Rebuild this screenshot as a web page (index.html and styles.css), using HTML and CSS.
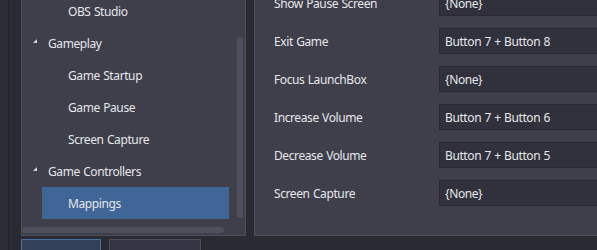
FILE: index.html
```html
<!DOCTYPE html>
<html lang="en">
<head>
    <meta charset="UTF-8">
    <title>Options - Game Controllers</title>
    <link rel="stylesheet" href="styles.css">
</head>
<body>
    <div class="app">
        <div class="rail"></div>
        <div class="content">
            <div class="panes">
                <div class="tree-panel">
                    <ul class="tree">
                        <li class="node child">OBS Studio</li>
                        <li class="node parent"><span class="arrow"></span>Gameplay</li>
                        <li class="node child">Game Startup</li>
                        <li class="node child">Game Pause</li>
                        <li class="node child">Screen Capture</li>
                        <li class="node parent"><span class="arrow"></span>Game Controllers</li>
                        <li class="node child selected">Mappings</li>
                    </ul>
                    <div class="vscroll"><div class="thumb-v"></div></div>
                    <div class="hscroll"><div class="thumb-h"></div></div>
                </div>

                <div class="form-panel">
                    <div class="row">
                        <label>Show Pause Screen</label>
                        <div class="field">{None}</div>
                    </div>
                    <div class="row">
                        <label>Exit Game</label>
                        <div class="field">Button 7 + Button 8</div>
                    </div>
                    <div class="row">
                        <label>Focus LaunchBox</label>
                        <div class="field">{None}</div>
                    </div>
                    <div class="row">
                        <label>Increase Volume</label>
                        <div class="field">Button 7 + Button 6</div>
                    </div>
                    <div class="row">
                        <label>Decrease Volume</label>
                        <div class="field">Button 7 + Button 5</div>
                    </div>
                    <div class="row">
                        <label>Screen Capture</label>
                        <div class="field">{None}</div>
                    </div>
                </div>
            </div>

            <div class="footer">
                <button class="btn primary">OK</button>
                <button class="btn">Cancel</button>
            </div>
        </div>
    </div>
</body>
</html>
```

FILE: styles.css
```css
body {
    margin: 0;
    height: 250px;
    overflow: hidden;
    background-color: #2a2a33;
    font-family: "Noto Sans", "Open Sans", sans-serif;
    font-size: 12px;
    letter-spacing: -0.4px;
    word-spacing: 0.6px;
    color: #e6e6ea;
}
.app {
    display: flex;
    height: 250px;
}
.rail {
    width: 8px;
    flex-shrink: 0;
    background-color: #2d2d37;
    border-right: 1px solid #222229;
}
.content {
    flex: 1;
    padding-left: 12px;
    display: flex;
    flex-direction: column;
    overflow: hidden;
}
.panes {
    display: flex;
    gap: 8px;
    margin-top: -40px;
    height: 276px;
    flex-shrink: 0;
}

/* tree on the left */
.tree-panel {
    width: 225px;
    flex-shrink: 0;
    box-sizing: border-box;
    background-color: #3e3f4b;
    border: 1px solid #4d4e5b;
    display: grid;
    grid-template-columns: 214px 9px;
    grid-template-rows: 1fr 9px;
}
.tree {
    list-style: none;
    margin: 0;
    padding: 34px 0 0;
    overflow: hidden;
}
.node {
    height: 32px;
    display: flex;
    align-items: center;
}
.parent {
    padding-left: 11px;
}
.child {
    margin-left: 20px;
    width: 187px;
    padding-left: 26px;
    box-sizing: border-box;
}
.selected {
    background-color: #3f6696;
}
.arrow {
    width: 0;
    height: 0;
    border-left: 4px solid transparent;
    border-bottom: 4px solid #d6d6dc;
    margin-right: 11px;
    margin-top: -4px;
}
.vscroll {
    padding-left: 1px;
}
.thumb-v {
    width: 6px;
    height: 181px;
    margin-top: 76px;
    border-radius: 3px;
    background-color: #4f505e;
}
.hscroll {
    grid-column: 1 / 3;
}
.thumb-h {
    width: 202px;
    height: 6px;
    margin-top: 1px;
    border-radius: 3px;
    background-color: #4f505e;
}

/* mapping form */
.form-panel {
    width: 400px;
    flex-shrink: 0;
    box-sizing: border-box;
    background-color: #3e3f4b;
    border: 1px solid #4d4e5b;
    padding: 29px 0 0 19px;
    display: flex;
    flex-direction: column;
    gap: 12px;
}
.row {
    display: flex;
    align-items: center;
    height: 26px;
}
.row label {
    width: 165px;
    flex-shrink: 0;
}
.field {
    width: 220px;
    height: 26px;
    box-sizing: border-box;
    background-color: #30313c;
    border: 1px solid #292a33;
    padding-left: 5px;
    display: flex;
    align-items: center;
}

.footer {
    display: flex;
    gap: 8px;
    padding-top: 3px;
}
.btn {
    width: 80px;
    height: 60px;
    background-color: #353644;
    border: 1px solid #4d4e5b;
    color: #e6e6ea;
    font-family: inherit;
    font-size: 12px;
    padding-top: 36px;
}
.btn.primary {
    background-color: #33405a;
    border-color: #4a6fa0;
}
.btn + .btn {
    width: 92px;
}
```
